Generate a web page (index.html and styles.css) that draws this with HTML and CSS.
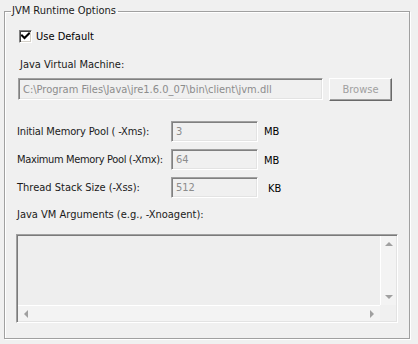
FILE: index.html
```html
<!DOCTYPE html>
<html>
<head>
<meta charset="utf-8">
<link rel="stylesheet" href="styles.css">
</head>
<body>
<div class="wrap">
  <fieldset class="group">
    <legend class="group-title">JVM Runtime Options</legend>
    <div class="group-body">
      <label class="check-row">
        <span class="checkbox">
          <svg width="9" height="9" viewBox="0 0 9 9"><path d="M1 3.5 L3.5 6 L8 1.5" fill="none" stroke="#000" stroke-width="2" stroke-linecap="square"/></svg>
        </span>
        <span class="check-text">Use Default</span>
      </label>

      <div class="jvm-label">Java Virtual Machine:</div>

      <div class="path-row">
        <div class="field field-path">C:\Program Files\Java\jre1.6.0_07\bin\client\jvm.dll</div>
        <div class="button">Browse</div>
      </div>

      <div class="mem-grid">
        <div class="mem-label tight">Initial Memory Pool ( -Xms):</div>
        <div class="field field-mem">3</div>
        <div class="unit">MB</div>

        <div class="mem-label tighter">Maximum Memory Pool (-Xmx):</div>
        <div class="field field-mem">64</div>
        <div class="unit unit-low">MB</div>

        <div class="mem-label">Thread Stack Size (-Xss):</div>
        <div class="field field-mem">512</div>
        <div class="unit unit-kb">KB</div>
      </div>

      <div class="args-label">Java VM Arguments (e.g., -Xnoagent):</div>

      <div class="textarea">
        <div class="ta-main"></div>
        <div class="vscroll">
          <div class="sbtn"><span class="arrow arrow-up"></span></div>
          <div class="track"></div>
          <div class="sbtn"><span class="arrow arrow-down"></span></div>
        </div>
        <div class="hscroll">
          <div class="sbtn"><span class="arrow arrow-left"></span></div>
          <div class="track"></div>
          <div class="sbtn"><span class="arrow arrow-right"></span></div>
        </div>
        <div class="corner"></div>
      </div>
    </div>
  </fieldset>
</div>
</body>
</html>
```

FILE: styles.css
```css
html, body {
  margin: 0;
  padding: 0;
  background: #f0f0f0;
}

body {
  width: 418px;
  height: 344px;
  overflow: hidden;
  font-family: "DejaVu Sans Condensed", "Liberation Sans", sans-serif;
  font-size: 11px;
  color: #1a1a1a;
}

.wrap {
  padding: 4px 0 0 4px;
}

.group {
  box-sizing: border-box;
  width: 406px;
  height: 335px;
  margin: 0;
  padding: 0;
  border: 1px solid #a0a0a0;
  box-shadow: inset 1px 1px 0 #fff, 1px 1px 0 #fff;
  min-width: 0;
}

.group-title {
  margin-left: 6px;
  padding: 0 2px 0 1px;
  line-height: 14px;
  height: 14px;
}

.group-body {
  padding-left: 11px;
  display: flex;
  flex-direction: column;
  align-items: flex-start;
}

.check-row {
  display: flex;
  align-items: center;
  margin-top: 12px;
  margin-left: 3px;
  height: 13px;
}

.checkbox {
  box-sizing: border-box;
  width: 13px;
  height: 13px;
  background: #fff;
  border-top: 1px solid #808080;
  border-left: 1px solid #808080;
  border-right: 1px solid #fff;
  border-bottom: 1px solid #fff;
  box-shadow: inset 1px 1px 0 #404040, inset -1px -1px 0 #d4d0c8;
  display: flex;
  align-items: center;
  justify-content: center;
}

.checkbox svg {
  display: block;
}

.check-text {
  margin-left: 4px;
  line-height: 13px;
  color: #000;
}

.jvm-label {
  margin-top: 15px;
  margin-left: 4px;
  line-height: 14px;
}

.path-row {
  display: flex;
  align-items: flex-start;
  margin-top: 6px;
  margin-left: 2px;
}

.field {
  box-sizing: border-box;
  background: #f0f0f0;
  border-top: 1px solid #a0a0a0;
  border-left: 1px solid #a0a0a0;
  border-right: 1px solid #fff;
  border-bottom: 1px solid #fff;
  box-shadow: inset 1px 1px 0 #808080, inset -1px -1px 0 #e3e3e3;
  color: #8c8c8c;
  display: flex;
  align-items: center;
  padding-left: 4px;
  white-space: nowrap;
  overflow: hidden;
}

.field-path {
  width: 305px;
  height: 22px;
}

.button {
  box-sizing: border-box;
  width: 63px;
  height: 23px;
  margin-left: 6px;
  background: #f0f0f0;
  border-top: 1px solid #fff;
  border-left: 1px solid #fff;
  border-right: 1px solid #696969;
  border-bottom: 1px solid #696969;
  box-shadow: inset -1px -1px 0 #a0a0a0;
  color: #a0a0a0;
  display: flex;
  align-items: center;
  justify-content: center;
}

.mem-grid {
  display: grid;
  grid-template-columns: 154px 87px auto;
  grid-auto-rows: 21px;
  row-gap: 7px;
  align-items: center;
  margin-top: 20px;
  margin-left: 1px;
}

.mem-label {
  line-height: 14px;
  white-space: nowrap;
}

.tight {
  letter-spacing: -0.15px;
}

.tighter {
  letter-spacing: -0.35px;
}

.field-mem {
  height: 21px;
}

.unit {
  margin-left: 6px;
  color: #000;
  line-height: 14px;
  padding-top: 1px;
}

.unit-low {
  padding-top: 3px;
}

.unit-kb {
  margin-left: 10px;
  padding-top: 3px;
}

.args-label {
  margin-top: 10px;
  margin-left: 1px;
  line-height: 14px;
}

.textarea {
  box-sizing: border-box;
  width: 382px;
  height: 89px;
  margin-top: 12px;
  border-top: 1px solid #a0a0a0;
  border-left: 1px solid #a0a0a0;
  border-right: 1px solid #fff;
  border-bottom: 1px solid #fff;
  box-shadow: inset 1px 1px 0 #7a7a7a, inset -1px -1px 0 #e3e3e3;
  padding: 1px;
  display: grid;
  grid-template-columns: 1fr 16px;
  grid-template-rows: 1fr 16px;
  background: #eeeeee;
}

.ta-main {
  background: #eeeeee;
}

.vscroll {
  display: flex;
  flex-direction: column;
  background: #f3f3f3;
  border-left: 1px solid #fff;
}

.hscroll {
  display: flex;
  background: #f3f3f3;
  border-top: 1px solid #fff;
}

.track {
  flex: 1;
}

.sbtn {
  width: 16px;
  height: 16px;
  flex: none;
  display: flex;
  align-items: center;
  justify-content: center;
}

.vscroll .sbtn {
  width: 15px;
}

.hscroll .sbtn {
  height: 15px;
}

.corner {
  background: #f0f0f0;
}

.arrow {
  width: 0;
  height: 0;
  display: block;
}

.arrow-up {
  border-left: 4px solid transparent;
  border-right: 4px solid transparent;
  border-bottom: 4px solid #a0a0a0;
}

.arrow-down {
  border-left: 4px solid transparent;
  border-right: 4px solid transparent;
  border-top: 4px solid #a0a0a0;
}

.arrow-left {
  border-top: 4px solid transparent;
  border-bottom: 4px solid transparent;
  border-right: 4px solid #a0a0a0;
}

.arrow-right {
  border-top: 4px solid transparent;
  border-bottom: 4px solid transparent;
  border-left: 4px solid #a0a0a0;
}
```
